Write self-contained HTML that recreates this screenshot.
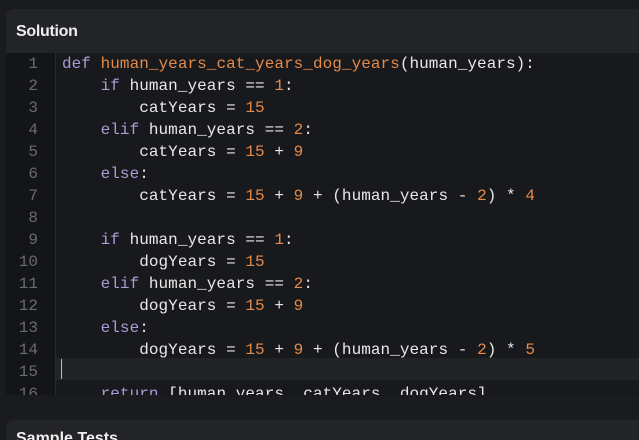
<!DOCTYPE html>
<html style="overflow:hidden;height:440px"><head><style>
body{margin:0;width:639px;height:440px;background:#1a1b1e;overflow:hidden;position:relative;font-family:"Liberation Sans",sans-serif}
.card{position:absolute;left:6px;top:9px;width:700px;height:386px;background:#232427;border-radius:8px 0 0 0;overflow:hidden}
.hd{height:44px;color:#eee;font-weight:bold;font-size:16px;line-height:46px;padding-left:10px;letter-spacing:-0.3px}
.code{position:absolute;top:44px;left:0;right:0;bottom:0;background:#18191c}
.gut{position:absolute;left:0;top:0;width:49px;bottom:0;background:#141518;border-right:1px solid #2a2b2e}
.ln{position:absolute;left:0;width:32px;text-align:right;color:#6a6b6e;font:16px/22px "Liberation Mono",monospace}
.l{position:absolute;left:56px;white-space:pre;color:#e8e8e8;font:16px/22px "Liberation Mono",monospace;letter-spacing:0.05px}
.k{color:#a99bd6}.f{color:#e48a4a}.n{color:#e48a4a}
.hl{position:absolute;left:50px;right:0;height:22px;background:#222325}
.cur{position:absolute;left:55px;width:1px;height:20px;background:#bbb}
.card2{position:absolute;left:6px;top:420px;width:700px;height:20px;background:#232427;border-radius:8px 0 0 0;overflow:hidden}
.card2 div{color:#eee;font-weight:bold;font-size:16px;padding:10px 0 0 10px}
</style></head><body>
<div class="card"><div class="hd">Solution</div>
<div class="code">
<div class="gut"></div>
<div class="hl" style="top:305px"></div><div class="cur" style="top:306px"></div>
<div class="ln" style="top:0">1</div><div class="ln" style="top:22px">2</div><div class="ln" style="top:44px">3</div><div class="ln" style="top:66px">4</div><div class="ln" style="top:88px">5</div><div class="ln" style="top:110px">6</div><div class="ln" style="top:132px">7</div><div class="ln" style="top:154px">8</div><div class="ln" style="top:176px">9</div><div class="ln" style="top:198px">10</div><div class="ln" style="top:220px">11</div><div class="ln" style="top:242px">12</div><div class="ln" style="top:264px">13</div><div class="ln" style="top:286px">14</div><div class="ln" style="top:308px">15</div><div class="ln" style="top:330px">16</div>
<div class="l" style="top:0"><span class="k">def</span> <span class="f">human_years_cat_years_dog_years</span>(human_years):</div>
<div class="l" style="top:22px">    <span class="k">if</span> human_years == <span class="n">1</span>:</div>
<div class="l" style="top:44px">        catYears = <span class="n">15</span></div>
<div class="l" style="top:66px">    <span class="k">elif</span> human_years == <span class="n">2</span>:</div>
<div class="l" style="top:88px">        catYears = <span class="n">15</span> + <span class="n">9</span></div>
<div class="l" style="top:110px">    <span class="k">else</span>:</div>
<div class="l" style="top:132px">        catYears = <span class="n">15</span> + <span class="n">9</span> + (human_years - <span class="n">2</span>) * <span class="n">4</span></div>
<div class="l" style="top:176px">    <span class="k">if</span> human_years == <span class="n">1</span>:</div>
<div class="l" style="top:198px">        dogYears = <span class="n">15</span></div>
<div class="l" style="top:220px">    <span class="k">elif</span> human_years == <span class="n">2</span>:</div>
<div class="l" style="top:242px">        dogYears = <span class="n">15</span> + <span class="n">9</span></div>
<div class="l" style="top:264px">    <span class="k">else</span>:</div>
<div class="l" style="top:286px">        dogYears = <span class="n">15</span> + <span class="n">9</span> + (human_years - <span class="n">2</span>) * <span class="n">5</span></div>
<div class="l" style="top:330px">    <span class="k">return</span> [human_years, catYears, dogYears]</div>
</div></div>
<div class="card2"><div>Sample Tests</div></div>
</body></html>
